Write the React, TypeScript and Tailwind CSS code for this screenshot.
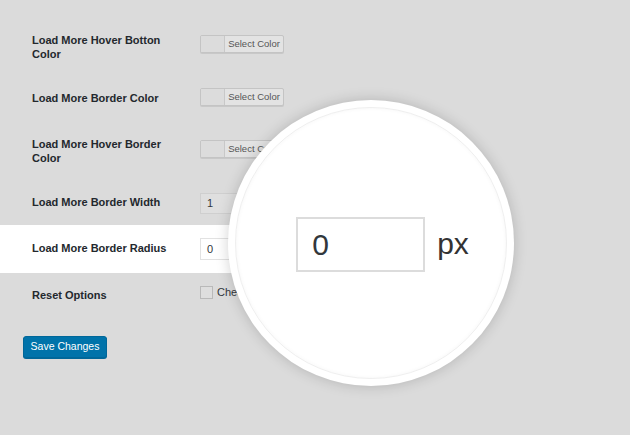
import React from "react";

const font = { fontFamily: '"Helvetica Neue", "Liberation Sans", Arial, sans-serif' };

function SelectColor() {
  return (
    <div className="flex h-[18px] w-[84px] overflow-hidden rounded-[2px] border border-[#c4c4c4] bg-[#e3e3e3] shadow-[0_1px_0_#c8c8c8]">
      <div className="w-[24px] border-r border-[#c8c8c8] bg-[#dcdcdc]" />
      <div className="flex flex-1 items-center justify-center text-[9.5px] text-[#555]">Select Color</div>
    </div>
  );
}

export default function App() {
  return (
    <div className="relative h-[435px] w-[630px] overflow-hidden bg-[#dbdbdb]" style={font}>
      <div className="flex flex-col pt-[20px]">
        {/* Row 1 */}
        <div className="flex h-[60px]">
          <div className="w-[200px] pl-[32px] pt-[13px] text-[11px] font-bold leading-[14px] text-[#23282d]">
            Load More Hover Botton<br />Color
          </div>
          <div className="pt-[15px]">
            <SelectColor />
          </div>
        </div>
        {/* Row 2 */}
        <div className="flex h-[48px]">
          <div className="w-[200px] pl-[32px] pt-[11px] text-[11px] font-bold leading-[14px] text-[#23282d]">
            Load More Border Color
          </div>
          <div className="pt-[8px]">
            <SelectColor />
          </div>
        </div>
        {/* Row 3 */}
        <div className="flex h-[51px]">
          <div className="w-[200px] pl-[32px] pt-[9px] text-[11px] font-bold leading-[14px] text-[#23282d]">
            Load More Hover Border<br />Color
          </div>
          <div className="pt-[12px]">
            <SelectColor />
          </div>
        </div>
        {/* Row 4 */}
        <div className="flex h-[46px]">
          <div className="w-[200px] pl-[32px] pt-[16px] text-[11px] font-bold leading-[14px] text-[#23282d]">
            Load More Border Width
          </div>
          <div className="pt-[14px]">
            <div className="flex h-[21px] w-[60px] items-center border border-[#cfcfcf] bg-[#dfdfdf] pl-[6px] text-[11px] text-[#32373c]">1</div>
          </div>
        </div>
        {/* Row 5 highlighted */}
        <div className="flex h-[48px] w-[300px] bg-white">
          <div className="w-[200px] shrink-0 pl-[32px] pt-[16px] text-[11px] font-bold leading-[14px] text-[#23282d]">
            Load More Border Radius
          </div>
          <div className="pt-[13px]">
            <div className="flex h-[22px] w-[60px] items-center border border-[#e2e2e2] bg-white pl-[6px] text-[11px] text-[#32373c]">0</div>
          </div>
        </div>
        {/* Row 6 */}
        <div className="flex h-[44px]">
          <div className="w-[200px] pl-[32px] pt-[15px] text-[11px] font-bold leading-[14px] text-[#23282d]">
            Reset Options
          </div>
          <div className="flex items-start gap-[4px] pt-[13px]">
            <div className="h-[13px] w-[13px] border border-[#b9b9b9] bg-[#dedede]" />
            <span className="text-[11px] leading-[12px] text-[#32373c]">Check to reset</span>
          </div>
        </div>
        {/* Save */}
        <div className="pl-[23px] pt-[19px]">
          <div className="flex h-[22px] w-[84px] items-center justify-center rounded-[3px] border border-[#006799] bg-[#0073aa] text-[10.5px] text-white shadow-[0_1px_0_#006799]">
            Save Changes
          </div>
        </div>
      </div>

      {/* Magnifier */}
      <div className="absolute left-[228px] top-[100px] flex h-[286px] w-[286px] items-center justify-center rounded-full bg-white shadow-[0_0_14px_rgba(0,0,0,0.18)]">
        <div className="absolute inset-[7px] rounded-full border border-[#efefef] shadow-[inset_0_0_4px_rgba(0,0,0,0.04)]" />
        <div className="relative flex items-center gap-[12px] pl-[23px] pt-[3px]">
          <div className="flex h-[55px] w-[129px] items-center border-2 border-[#dcdcdc] bg-white pl-[14px] text-[30px] text-[#32373c]">
            0
          </div>
          <span className="pb-[2px] text-[30px] leading-none text-[#333]">px</span>
        </div>
      </div>
    </div>
  );
}
